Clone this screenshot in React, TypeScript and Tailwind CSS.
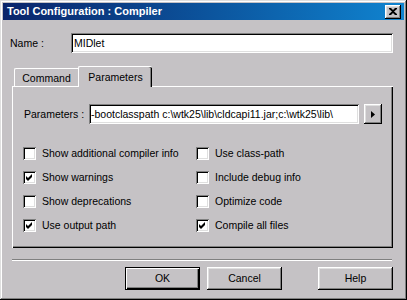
import React from 'react';

const raised =
	'shadow-[inset_-1px_-1px_0_#000,inset_1px_1px_0_#fff,inset_-2px_-2px_0_#808080,inset_2px_2px_0_#dfdfdf]';
const sunken =
	'shadow-[inset_1px_1px_0_#808080,inset_-1px_-1px_0_#fff,inset_2px_2px_0_#000,inset_-2px_-2px_0_#dfdfdf]';

const Check = ({ label, checked }: { label: string; checked?: boolean }) => (
	<div className="flex h-[24px] items-center gap-[6px]">
		<span className={`relative h-[13px] w-[13px] shrink-0 bg-white ${sunken}`}>
			{checked && (
				<svg width="13" height="13" viewBox="0 0 13 13" className="absolute left-0 top-0">
					<polygon points="3,5 5,7 9,3 9,6 5,10 3,8" fill="#000" />
				</svg>
			)}
		</span>
		<span>{label}</span>
	</div>
);

const Button = ({ children, primary }: { children: React.ReactNode; primary?: boolean }) => (
	<button
		className={`flex h-[23px] w-[75px] items-center justify-center bg-[#c5c2c5] ${
			primary
				? 'shadow-[inset_0_0_0_1px_#000,inset_2px_2px_0_#fff,inset_-2px_-2px_0_#000,inset_-3px_-3px_0_#808080]'
				: raised
		}`}
	>
		{children}
	</button>
);

export default function App() {
	return (
		<div
			className="flex h-[300px] w-[407px] flex-col bg-[#c5c2c5] p-[3px] text-[10.5px] leading-none text-black shadow-[inset_-1px_-1px_0_#000,inset_1px_1px_0_#dfdfdf,inset_-2px_-2px_0_#808080,inset_2px_2px_0_#fff]"
			style={{ fontFamily: '"Liberation Sans", Arial, sans-serif' }}
		>
			{/* title bar */}
			<div className="flex h-[17px] shrink-0 items-center justify-between bg-gradient-to-r from-[#0a246a] to-[#1084d0] pl-[4px] pr-[3px]">
				<span className="text-[11px] font-bold text-white">Tool Configuration : Compiler</span>
				<button className={`flex h-[14px] w-[16px] items-center justify-center bg-[#c5c2c5] ${raised}`}>
					<svg width="8" height="7" viewBox="0 0 8 7">
						<path d="M0 0h2l2 2 2-2h2v1L5 3.5 8 6v1H6L4 5 2 7H0V6l3-2.5L0 1z" fill="#000" />
					</svg>
				</button>
			</div>

			{/* name row */}
			<div className="mt-[13px] flex h-[20px] items-center pl-[7px]">
				<span className="w-[61px]">Name :</span>
				<div className={`flex h-[20px] w-[322px] items-center bg-white pl-[3px] ${sunken}`}>MIDlet</div>
			</div>

			{/* tabs */}
			<div className="ml-[9px] mt-[13px] flex h-[21px] w-[381px] items-end">
				<div className="h-[1px] w-[2px] bg-white" />
				<div className="flex h-[19px] w-[64px] items-center justify-center rounded-tl-[2px] border-l border-t border-b border-white pt-[1px]">
					Command
				</div>
				<div className="flex h-[21px] w-[74px] items-start justify-center rounded-t-[2px] border-l border-t border-white pt-[5px] shadow-[inset_-1px_0_0_#000,inset_-2px_0_0_#808080]">
					Parameters
				</div>
				<div className="h-[1px] flex-1 bg-white" />
			</div>

			{/* panel */}
			<div className="ml-[9px] flex h-[161px] w-[381px] flex-col border-l border-white pl-[10px] shadow-[inset_-1px_-1px_0_#000,inset_-2px_-2px_0_#808080]">
				<div className="mt-[17px] flex h-[20px] items-center pl-[1px]">
					<span className="w-[65px]">Parameters :</span>
					<div className={`flex h-[20px] w-[270px] items-center overflow-hidden whitespace-nowrap bg-white pl-[2px] ${sunken}`}>
						-bootclasspath c:\wtk25\lib\cldcapi11.jar;c:\wtk25\lib\
					</div>
					<button className={`ml-[5px] flex h-[20px] w-[18px] items-center justify-center bg-[#c5c2c5] ${raised}`}>
						<svg width="4" height="7" viewBox="0 0 4 7">
							<path d="M0 0L4 3.5 0 7z" fill="#000" />
						</svg>
					</button>
				</div>
				<div className="mt-[17px] grid grid-cols-[173px_1fr]">
					<Check label="Show additional compiler info" />
					<Check label="Use class-path" />
					<Check label="Show warnings" checked />
					<Check label="Include debug info" />
					<Check label="Show deprecations" />
					<Check label="Optimize code" />
					<Check label="Use output path" checked />
					<Check label="Compile all files" checked />
				</div>
			</div>

			{/* separator */}
			<div className="ml-[9px] mt-[11px] h-[2px] w-[380px] border-t border-b border-t-[#808080] border-b-white" />

			{/* buttons */}
			<div className="mt-[6px] flex w-[390px] justify-end">
				<Button primary>OK</Button>
				<div className="ml-[7px]">
					<Button>Cancel</Button>
				</div>
				<div className="ml-[36px]">
					<Button>Help</Button>
				</div>
			</div>
		</div>
	);
}
